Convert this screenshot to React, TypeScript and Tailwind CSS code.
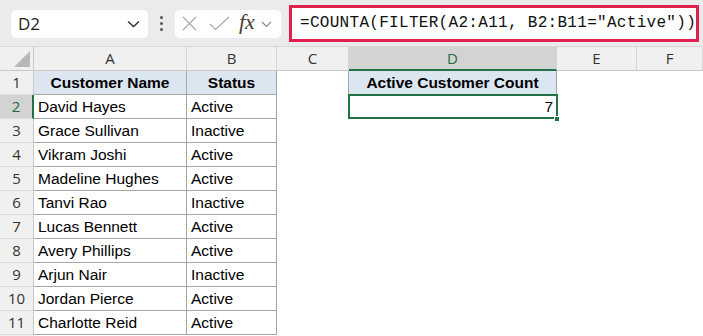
import React from 'react';

const rows: [string, string][] = [
    ['David Hayes', 'Active'],
    ['Grace Sullivan', 'Inactive'],
    ['Vikram Joshi', 'Active'],
    ['Madeline Hughes', 'Active'],
    ['Tanvi Rao', 'Inactive'],
    ['Lucas Bennett', 'Active'],
    ['Avery Phillips', 'Active'],
    ['Arjun Nair', 'Inactive'],
    ['Jordan Pierce', 'Active'],
    ['Charlotte Reid', 'Active'],
];

const cellFont = "font-['Liberation_Sans',sans-serif] text-[15.5px]";

const Toolbar: React.FC = () => (
    <div className="h-[47px] bg-[#ebebeb] border-b border-[#d6d6d6] flex items-center pl-[11px] shrink-0">
        <div className="w-[137px] h-[28px] bg-white rounded-[5px] flex items-center justify-between pl-[7px] pr-[8px] mt-[1px]">
            <span className="font-['Open_Sans',sans-serif] text-[17px] text-[#222]">D2</span>
            <svg width="13" height="8" viewBox="0 0 13 8" fill="none" stroke="#333" strokeWidth="1.5">
                <path d="M1 1.5 L6.5 6.5 L12 1.5" />
            </svg>
        </div>
        <div className="w-[27px] flex flex-col items-center gap-[3px] mt-[1px]">
            <span className="w-[3px] h-[3px] bg-[#555] rounded-full" />
            <span className="w-[3px] h-[3px] bg-[#555] rounded-full" />
            <span className="w-[3px] h-[3px] bg-[#555] rounded-full" />
        </div>
        <div className="w-[106px] h-[28px] bg-white rounded-[5px] flex items-center pl-[7px] mt-[1px]">
            <svg width="15" height="15" viewBox="0 0 15 15" fill="none" stroke="#a8a8a8" strokeWidth="1.2">
                <path d="M1 1 L14 14 M14 1 L1 14" />
            </svg>
            <svg className="ml-[12px]" width="21" height="15" viewBox="0 0 21 15" fill="none" stroke="#a8a8a8" strokeWidth="1.2">
                <path d="M1 8 L6.5 13.5 L20 1" />
            </svg>
            <span className="ml-[9px] font-['Liberation_Serif',serif] italic text-[22px] text-[#4a3b30] leading-none -mt-[3px]">fx</span>
            <svg className="ml-[6px] mt-[2px]" width="11" height="7" viewBox="0 0 11 7" fill="none" stroke="#8a8a8a" strokeWidth="1.2">
                <path d="M1 1 L5.5 5.5 L10 1" />
            </svg>
        </div>
        <div className="ml-[8px] w-[410px] h-[37px] bg-white border-[3px] border-[#e3204d] flex items-center pl-[8px] overflow-hidden whitespace-nowrap">
            <span className="font-['Liberation_Mono',monospace] text-[16px] tracking-[0.3px] text-[#111]">=COUNTA(FILTER(A2:A11, B2:B11="Active"))</span>
        </div>
    </div>
);

const ColHeader: React.FC<{ label: string; w: string; active?: boolean }> = ({ label, w, active }) => (
    <div className={`${w} h-full flex items-center justify-center border-r border-[#d4d4d4] font-['Open_Sans',sans-serif] text-[15px] ${active ? 'bg-[#d3d3d3] border-b-2 border-b-[#217346] text-[#1e6b41]' : 'border-b border-b-[#c8c8c8] text-[#333]'}`}>
        {label}
    </div>
);

const App: React.FC = () => {
    return (
        <div className="w-[703px] h-[336px] bg-white overflow-hidden flex flex-col">
            <Toolbar />
            <div className="h-[24px] flex bg-[#f0f0f0] shrink-0">
                <div className="w-[34px] h-full border-r border-b border-[#c8c8c8] flex items-end justify-end pr-[3px] pb-[3px]">
                    <svg width="16" height="16" viewBox="0 0 16 16">
                        <path d="M16 0 L16 16 L0 16 Z" fill="#b8b8b8" />
                    </svg>
                </div>
                <ColHeader label="A" w="w-[153px]" />
                <ColHeader label="B" w="w-[90px]" />
                <ColHeader label="C" w="w-[72px]" />
                <ColHeader label="D" w="w-[208px]" active />
                <ColHeader label="E" w="w-[80px]" />
                <ColHeader label="F" w="flex-1" />
            </div>
            <div className="flex h-[24px] shrink-0">
                <div className="w-[34px] bg-[#f0f0f0] border-r border-b border-[#c8c8c8] border-b-[#dcdcdc] flex items-center justify-center font-['Open_Sans',sans-serif] text-[15px] text-[#333]">1</div>
                <div className={`w-[153px] bg-[#dce6f1] border-r border-b border-[#a6a6a6] flex items-center justify-center font-bold ${cellFont} text-black`}>Customer Name</div>
                <div className={`w-[90px] bg-[#dce6f1] border-r border-b border-[#a6a6a6] flex items-center justify-center font-bold ${cellFont} text-black`}>Status</div>
                <div className="w-[71px]" />
                <div className={`w-[209px] bg-[#dce6f1] border-l border-r border-b border-[#a6a6a6] flex items-center justify-center font-bold ${cellFont} text-black`}>Active Customer Count</div>
            </div>
            {rows.map(([name, status], i) => {
                const n = i + 2;
                const sel = n === 2;
                return (
                    <div key={n} className="flex h-[24px] shrink-0">
                        <div className={`w-[34px] border-b border-b-[#dcdcdc] flex items-center justify-center font-['Open_Sans',sans-serif] text-[15px] ${sel ? 'bg-[#d3d3d3] border-r-2 border-r-[#217346] text-[#1e6b41]' : 'bg-[#f0f0f0] border-r border-r-[#c8c8c8] text-[#333]'}`}>{n}</div>
                        <div className={`w-[153px] border-r border-b border-[#a6a6a6] flex items-center pl-[4px] ${cellFont} text-black`}>{name}</div>
                        <div className={`w-[90px] border-r border-b border-[#a6a6a6] flex items-center pl-[4px] ${cellFont} text-black`}>{status}</div>
                        <div className="w-[72px]" />
                        {sel && (
                            <div className={`relative w-[208px] flex items-center justify-end pr-[4px] ${cellFont} text-black`}>
                                7
                                <div className="absolute -left-[1px] -top-[1px] -right-[1px] bottom-0 border-2 border-[#217346]" />
                                <div className="absolute -right-[3px] -bottom-[3px] w-[6px] h-[6px] bg-[#217346] border border-white" />
                            </div>
                        )}
                    </div>
                );
            })}
            <div className="flex h-[24px] shrink-0">
                <div className="w-[34px] bg-[#f0f0f0] border-r border-[#c8c8c8]" />
            </div>
        </div>
    );
};

export default App;
